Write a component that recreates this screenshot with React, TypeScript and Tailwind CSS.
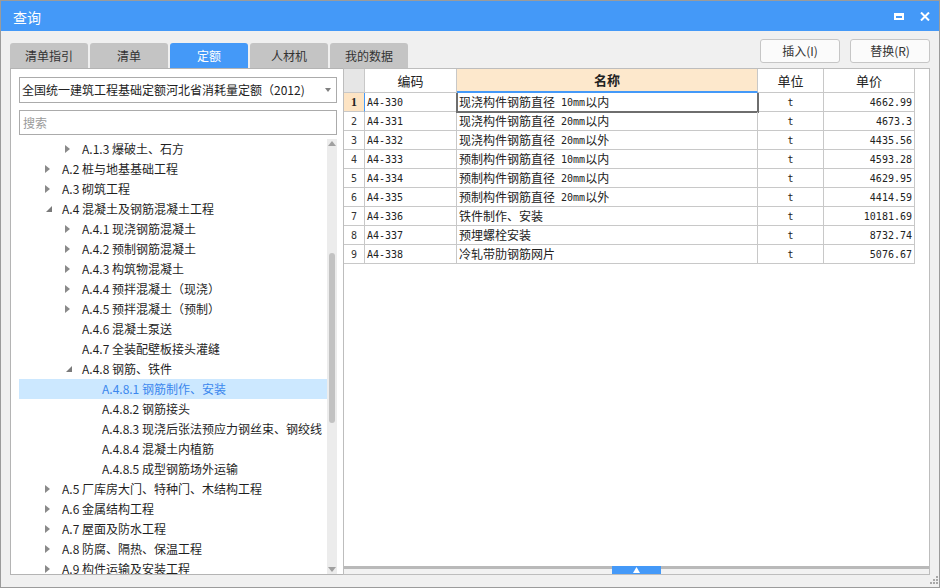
import React from 'react';

const tabs = ['清单指引', '清单', '定额', '人材机', '我的数据'];

type Node = { label: string; level: 1 | 2 | 3; arrow: 'right' | 'down' | 'none'; selected?: boolean };
const tree: Node[] = [
  { label: 'A.1.3 爆破土、石方', level: 2, arrow: 'right' },
  { label: 'A.2 桩与地基基础工程', level: 1, arrow: 'right' },
  { label: 'A.3 砌筑工程', level: 1, arrow: 'right' },
  { label: 'A.4 混凝土及钢筋混凝土工程', level: 1, arrow: 'down' },
  { label: 'A.4.1 现浇钢筋混凝土', level: 2, arrow: 'right' },
  { label: 'A.4.2 预制钢筋混凝土', level: 2, arrow: 'right' },
  { label: 'A.4.3 构筑物混凝土', level: 2, arrow: 'right' },
  { label: 'A.4.4 预拌混凝土（现浇）', level: 2, arrow: 'right' },
  { label: 'A.4.5 预拌混凝土（预制）', level: 2, arrow: 'right' },
  { label: 'A.4.6 混凝土泵送', level: 2, arrow: 'none' },
  { label: 'A.4.7 全装配壁板接头灌缝', level: 2, arrow: 'none' },
  { label: 'A.4.8 钢筋、铁件', level: 2, arrow: 'down' },
  { label: 'A.4.8.1 钢筋制作、安装', level: 3, arrow: 'none', selected: true },
  { label: 'A.4.8.2 钢筋接头', level: 3, arrow: 'none' },
  { label: 'A.4.8.3 现浇后张法预应力钢丝束、钢绞线', level: 3, arrow: 'none' },
  { label: 'A.4.8.4 混凝土内植筋', level: 3, arrow: 'none' },
  { label: 'A.4.8.5 成型钢筋场外运输', level: 3, arrow: 'none' },
  { label: 'A.5 厂库房大门、特种门、木结构工程', level: 1, arrow: 'right' },
  { label: 'A.6 金属结构工程', level: 1, arrow: 'right' },
  { label: 'A.7 屋面及防水工程', level: 1, arrow: 'right' },
  { label: 'A.8 防腐、隔热、保温工程', level: 1, arrow: 'right' },
  { label: 'A.9 构件运输及安装工程', level: 1, arrow: 'right' },
];

const indent: Record<number, string> = { 1: 'pl-[22px]', 2: 'pl-[42px]', 3: 'pl-[62px]' };

const rows: [string, string, string][] = [
  ['A4-330', '现浇构件钢筋直径 10mm以内', '4662.99'],
  ['A4-331', '现浇构件钢筋直径 20mm以内', '4673.3'],
  ['A4-332', '现浇构件钢筋直径 20mm以外', '4435.56'],
  ['A4-333', '预制构件钢筋直径 10mm以内', '4593.28'],
  ['A4-334', '预制构件钢筋直径 20mm以内', '4629.95'],
  ['A4-335', '预制构件钢筋直径 20mm以外', '4414.59'],
  ['A4-336', '铁件制作、安装', '10181.69'],
  ['A4-337', '预埋螺栓安装', '8732.74'],
  ['A4-338', '冷轧带肋钢筋网片', '5076.67'],
];

function Mixed({ text }: { text: string }) {
  const parts = text.match(/[\x00-\x7f]+|[^\x00-\x7f]+/g) || [];
  return (
    <>
      {parts.map((p, i) =>
        /^[\x00-\x7f]+$/.test(p) ? (
          <span key={i} className="font-['DejaVu_Sans_Mono',monospace] text-[10px] whitespace-pre">
            {p}
          </span>
        ) : (
          <span key={i}>{p}</span>
        )
      )}
    </>
  );
}

function ArrowRight() {
  return (
    <svg width="5" height="8" viewBox="0 0 5 8" className="ml-[4px]">
      <polygon points="0,0 5,4 0,8" fill="#8a8a8a" />
    </svg>
  );
}
function ArrowDown() {
  return (
    <svg width="6" height="6" viewBox="0 0 6 6" className="ml-[5px]">
      <polygon points="6,0 6,6 0,6" fill="#7a7a7a" />
    </svg>
  );
}

export default function App() {
  return (
    <div className="w-[940px] h-[588px] border border-[#9b9b9b] bg-[#f0f0f0] flex flex-col overflow-hidden font-['Noto_Sans_CJK_SC','Noto_Sans',sans-serif] text-[12px] text-[#222]">
      {/* title bar */}
      <div className="h-[30px] shrink-0 bg-[#4499f8] flex items-center pl-[12px] pr-[9px]">
        <span className="text-white text-[14px] leading-none mt-[1px]">查询</span>
        <div className="ml-auto flex items-center gap-[16px]">
          <div className="w-[10px] h-[7px] border-2 border-t-[3px] border-white" />
          <svg width="10" height="9" viewBox="0 0 10 9">
            <path d="M1 0.5 L9 8.5 M9 0.5 L1 8.5" stroke="white" strokeWidth="2" />
          </svg>
        </div>
      </div>

      {/* tabs + buttons */}
      <div className="h-[37px] shrink-0 flex pl-[9px] pr-[9px]">
        <div className="self-end flex gap-[2px]">
          {tabs.map((t, i) => (
            <div
              key={t}
              className={
                i === 2
                  ? 'w-[78px] h-[25px] rounded-t-[3px] bg-[#4499f8] text-white flex items-center justify-center'
                  : 'w-[78px] h-[25px] rounded-t-[3px] bg-[#c4c4c4] text-[#333] flex items-center justify-center'
              }
            >
              {t}
            </div>
          ))}
        </div>
        <div className="ml-auto mt-[8px] flex gap-[10px] h-[24px]">
          <div className="w-[80px] h-[24px] border border-[#c6c6c6] rounded-[3px] bg-[#fbfbfb] text-[#333] flex items-center justify-center">
            插入(I)
          </div>
          <div className="w-[80px] h-[24px] border border-[#c6c6c6] rounded-[3px] bg-[#fbfbfb] text-[#333] flex items-center justify-center">
            替换(R)
          </div>
        </div>
      </div>

      {/* panels */}
      <div className="h-[507px] shrink-0 flex pl-[9px]">
        {/* left panel */}
        <div className="w-[333px] h-full border-l border-t border-b border-[#b4b4b4] bg-white flex flex-col pl-[8px]">
          <div className="mt-[8px] w-[318px] h-[26px] shrink-0 border border-[#ababab] flex items-center pl-[2px] pr-[5px]">
            <span className="text-[#222]">全国统一建筑工程基础定额河北省消耗量定额（2012)</span>
            <svg width="6" height="4" viewBox="0 0 6 4" className="ml-auto">
              <polygon points="0,0 6,0 3,4" fill="#808080" />
            </svg>
          </div>
          <div className="mt-[7px] w-[318px] h-[25px] shrink-0 border border-[#ababab] flex items-center pl-[3px] text-[#9a9a9a]">
            搜索
          </div>
          <div className="mt-[4px] w-[318px] flex-1 min-h-0 flex">
            <div className="w-[308px] h-full overflow-hidden">
              {tree.map((n) => (
                <div
                  key={n.label}
                  className={
                    (n.selected ? 'bg-[#cce8ff] text-[#3b87ee] ' : 'text-[#1f1f1f] ') +
                    'h-[20px] flex items-center whitespace-nowrap ' +
                    indent[n.level]
                  }
                >
                  <div className="w-[21px] h-full flex items-center shrink-0">
                    {n.arrow === 'right' && <ArrowRight />}
                    {n.arrow === 'down' && <ArrowDown />}
                  </div>
                  <span>{n.label}</span>
                </div>
              ))}
            </div>
            <div className="w-[10px] h-full relative bg-[#ececec]">
              <svg width="8" height="5" viewBox="0 0 8 5" className="absolute top-[2px] left-[1px]">
                <polygon points="0,5 8,5 4,0" fill="#a0a0a0" />
              </svg>
              <div className="absolute top-[114px] left-[2px] w-[6px] h-[170px] rounded-full bg-[#c2c2c2]" />
              <svg width="8" height="5" viewBox="0 0 8 5" className="absolute bottom-[2px] left-[1px]">
                <polygon points="0,0 8,0 4,5" fill="#a0a0a0" />
              </svg>
            </div>
          </div>
        </div>

        {/* right panel */}
        <div className="w-[587px] h-full border border-[#bdbdbd] bg-white flex flex-col">
          <div className="flex-1 min-h-0">
            {/* header */}
            <div className="h-[24px] flex text-[13px] text-[#222]">
              <div className="w-[21px] h-full bg-[#e6e6e6] border-r border-b border-[#c8c8c8]" />
              <div className="w-[92px] h-full border-r border-b border-[#c8c8c8] flex items-center justify-center">编码</div>
              <div className="w-[301px] h-full bg-[#fde8cc] border-r border-[#c8c8c8] border-b-2 border-b-[#4499f8] flex items-center justify-center font-bold">
                名称
              </div>
              <div className="w-[66px] h-full border-r border-b border-[#c8c8c8] flex items-center justify-center">单位</div>
              <div className="w-[91px] h-full border-r border-b border-[#c8c8c8] flex items-center justify-center">单价</div>
            </div>
            {rows.map((r, i) => (
              <div key={r[0]} className="h-[19px] flex">
                <div
                  className={
                    i === 0
                      ? "w-[21px] h-full bg-[#fde4c4] border-r border-r-[#4499f8] border-b border-b-[#c8c8c8] flex items-center justify-center font-bold font-['Liberation_Serif',serif] text-[12px]"
                      : "w-[21px] h-full border-r border-b border-[#c8c8c8] flex items-center justify-center font-['DejaVu_Sans_Mono',monospace] text-[10px] text-[#333]"
                  }
                >
                  {i + 1}
                </div>
                <div className="w-[92px] h-full border-r border-b border-[#c8c8c8] flex items-center pl-[2px] font-['DejaVu_Sans_Mono',monospace] text-[10px]">
                  {r[0]}
                </div>
                <div className="w-[301px] h-full border-r border-b border-[#c8c8c8] flex items-center pl-[2px] relative whitespace-nowrap">
                  <Mixed text={r[1]} />
                  {i === 0 && (
                    <div className="absolute left-[-1px] top-0 right-[-2px] bottom-[-2px] border-l-2 border-r-2 border-b-2 border-[#6e6e6e]" />
                  )}
                </div>
                <div className="w-[66px] h-full border-r border-b border-[#c8c8c8] flex items-center justify-center font-['DejaVu_Sans_Mono',monospace] text-[10px]">
                  t
                </div>
                <div className="w-[91px] h-full border-r border-b border-[#c8c8c8] flex items-center justify-end pr-[2px] font-['DejaVu_Sans_Mono',monospace] text-[10px]">
                  {r[2]}
                </div>
              </div>
            ))}
          </div>
          <div className="h-[8px] shrink-0 relative bg-[#f2f2f2]">
            <div className="h-[3px] bg-[#b9b9b9]" />
            <div className="absolute left-[268px] top-0 w-[49px] h-[8px] bg-[#4499f8] flex items-center justify-center">
              <svg width="7" height="6" viewBox="0 0 7 6">
                <polygon points="3.5,0 7,6 0,6" fill="white" />
              </svg>
            </div>
          </div>
        </div>
      </div>

      {/* bottom */}
      <div className="flex-1 relative">
        <svg width="8" height="8" viewBox="0 0 8 8" className="absolute right-[1px] bottom-[3px]">
          <rect x="6" y="0" width="2" height="2" fill="#a8a8a8" />
          <rect x="3" y="3" width="2" height="2" fill="#a8a8a8" />
          <rect x="6" y="3" width="2" height="2" fill="#a8a8a8" />
          <rect x="0" y="6" width="2" height="2" fill="#a8a8a8" />
          <rect x="3" y="6" width="2" height="2" fill="#a8a8a8" />
          <rect x="6" y="6" width="2" height="2" fill="#a8a8a8" />
        </svg>
      </div>
    </div>
  );
}
